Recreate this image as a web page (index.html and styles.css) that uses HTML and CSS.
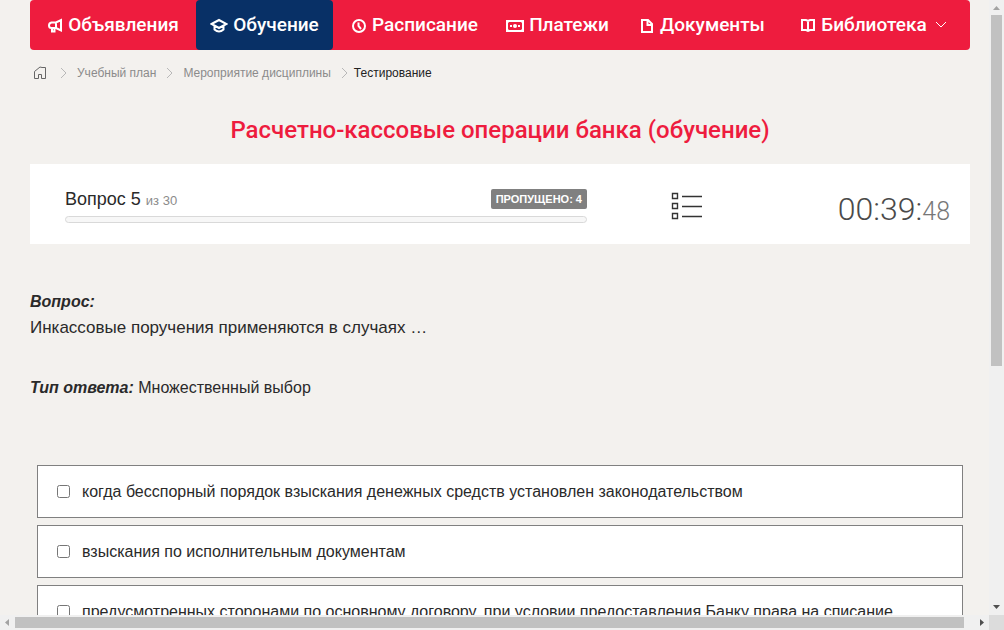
FILE: index.html
```html
<!DOCTYPE html>
<html lang="ru">
<head>
<meta charset="utf-8">
<meta name="viewport" content="width=device-width, initial-scale=1">
<title>Тестирование</title>
<link rel="stylesheet" href="styles.css">
</head>
<body>
<div class="frame">
  <div class="viewport">
    <nav class="menu">
      <a class="menu-item" href="#"><svg class="icon" viewBox="0 0 16 16"><path d="M14 3v10.500L9 11H4.500a2.500 2.500 0 0 1-2.500-2.500Q2 6 4.500 5.500L9 5.500zM9 5.500V11M5 11v3.500h2.500V11"/></svg><span>Объявления</span></a>
      <a class="menu-item menu-item-active" href="#"><svg class="icon icon-wide" viewBox="0 0 18 16"><path d="M1.500 7 9 3l7.500 4L9 11zM4.500 9v3.500Q9 16.500 13.500 12.500V9"/></svg><span>Обучение</span></a>
      <a class="menu-item" href="#"><svg class="icon" viewBox="0 0 16 16"><circle cx="8" cy="9" r="6"/><path d="M7.500 5.500V9l2.500 3"/></svg><span>Расписание</span></a>
      <a class="menu-item" href="#"><svg class="icon icon-wide" viewBox="0 0 18 16"><path d="M1 4h16v10H1z"/><circle class="solid" cx="9" cy="9" r="2"/><path class="solid" d="M1 3h4L1 7zM17 3h-4l4 4zM1 15h4l-4-4zM17 15h-4l4-4zM4 8h2v2H4zM12 8h2v2h-2z"/></svg><span>Платежи</span></a>
      <a class="menu-item" href="#"><svg class="icon" viewBox="0 0 16 16"><path d="M3 3h6l4 4v8H3zM8.500 3v5H13"/></svg><span>Документы</span></a>
      <a class="menu-item menu-item-drop" href="#"><svg class="icon" viewBox="0 0 16 16"><path d="M2 3h4L8 4l2-1h4v10h-4l-2 1-2-1H2zM8 4v11"/></svg><span>Библиотека</span><svg class="caret" viewBox="0 0 12 8"><path d="m1 1 5 5 5-5"/></svg></a>
    </nav>
    <nav class="crumbs" aria-label="Навигация">
      <a class="crumb-home" href="#" aria-label="Главная"><svg viewBox="0 0 14 14"><path d="M1.500 12.500h4V8.500h3v4h4v-11H9L7 1 1.500 5.500z"/></svg></a>
      <svg class="crumb-arrow" viewBox="0 0 7 12"><path d="m1 1 5 5-5 5"/></svg>
      <a href="#">Учебный план</a>
      <svg class="crumb-arrow" viewBox="0 0 7 12"><path d="m1 1 5 5-5 5"/></svg>
      <a href="#">Мероприятие дисциплины</a>
      <svg class="crumb-arrow crumb-arrow-last" viewBox="0 0 7 12"><path d="m1 1 5 5-5 5"/></svg>
      <span class="crumb-current">Тестирование</span>
    </nav>
    <h1 class="title">Расчетно-кассовые операции банка (обучение)</h1>
    <section class="status">
      <div class="progress">
        <div class="progress-head">
          <div class="counter">Вопрос 5 <small>из 30</small></div>
          <span class="badge">ПРОПУЩЕНО: 4</span>
        </div>
        <div class="bar"></div>
      </div>
      <button class="list-button" type="button" aria-label="Список вопросов"><svg viewBox="0 0 32 30"><path d="M1.500 2.500h5v5h-5zM1.500 12.500h5v5h-5zM1.500 22.500h5v5h-5zM11 5.500h20M11 15.500h20M11 25.500h20"/></svg></button>
      <div class="timer">00:39:<small>48</small></div>
    </section>
    <section class="question">
      <h2 class="label">Вопрос:</h2>
      <p class="question-text">Инкассовые поручения применяются в случаях …</p>
      <p class="answer-type"><span class="label">Тип ответа:</span> Множественный выбор</p>
    </section>
    <form class="answers">
      <label class="answer"><input type="checkbox"><span>когда бесспорный порядок взыскания денежных средств установлен законодательством</span></label>
      <label class="answer"><input type="checkbox"><span>взыскания по исполнительным документам</span></label>
      <label class="answer"><input type="checkbox"><span>предусмотренных сторонами по основному договору, при условии предоставления Банку права на списание</span></label>
    </form>
  </div>
  <div class="scroll scroll-y"><svg class="arrow-off" viewBox="0 0 15 15"><path d="M4 10 7.500 6l3.500 4z"/></svg><div class="thumb thumb-y"></div><svg class="arrow-end" viewBox="0 0 15 15"><path d="M4 5h7L7.500 9z"/></svg></div>
  <div class="scroll scroll-x"><svg class="arrow-off" viewBox="0 0 15 15"><path d="M9 4v7L5 7.500z"/></svg><div class="thumb thumb-x"></div><svg class="arrow-end" viewBox="0 0 15 15"><path d="M6 4v7l4-3.500z"/></svg></div>
  <div class="corner"></div>
</div>
</body>
</html>
```
FILE: styles.css
```css
* { box-sizing: border-box; }
body {
  margin: 0;
  background: #f3f1ee;
  color: #2a2a2a;
  font: 16px/24px "Liberation Sans", Arial, sans-serif;
}
a { color: inherit; text-decoration: none; }
svg { display: block; flex: none; fill: none; stroke: currentColor; }
h1, h2, p { margin: 0; }

.frame {
  display: grid;
  grid-template: minmax(0, 1fr) 15px / minmax(0, 1fr) 15px;
  height: 100vh;
}
.viewport { overflow: hidden; padding: 0 19px 0 30px; }

.menu {
  display: grid;
  grid-template-columns: 166fr 137fr 163fr 123fr 166fr 185fr;
  height: 50px;
  border-radius: 4px;
  background: #ee1c3e;
  color: #fff;
  font: 500 19px/24px Roboto, "Noto Sans", sans-serif;
  white-space: nowrap;
}
.menu-item {
  display: flex;
  align-items: center;
  justify-content: center;
  gap: 5px;
  border-radius: 4px;
}
.menu-item-active { background: #083066; }
.menu-item-drop { padding-right: 8px; }
.icon { width: 16px; height: 16px; stroke-width: 2; }
.icon-wide { width: 18px; }
.icon .solid { fill: currentColor; stroke: none; }
.caret { width: 12px; height: 8px; margin-left: 3px; }

.crumbs {
  display: flex;
  align-items: center;
  height: 46px;
  padding-left: 3px;
  gap: 10px;
  color: #8b8b8b;
  font-size: 12px;
}
.crumb-home svg { width: 14px; height: 14px; color: #666; }
.crumb-home { margin-right: 3px; }
.crumb-arrow { width: 7px; height: 12px; color: #b8b8b8; }
.crumb-arrow-last { margin-right: -4px; }
.crumb-current { color: #222; }

.title {
  padding: 17px 0;
  color: #ee1c3e;
  font: 500 24px/34px Roboto, "Noto Sans", sans-serif;
  text-align: center;
}

.status {
  display: grid;
  grid-template-columns: 557fr 200fr 183fr;
  align-items: center;
  height: 80px;
  background: #fff;
}
.progress { padding: 4px 0 0 35px; }
.progress-head { display: flex; align-items: center; justify-content: space-between; height: 20px; }
.counter { padding-top: 2px; font-size: 18px; }
.counter small { color: #8b8b8b; font-size: 13px; }
.badge {
  padding: 0 5px;
  border-radius: 2px;
  background: #808080;
  color: #fff;
  font-size: 11px;
  font-weight: bold;
  line-height: 20px;
}
.bar { height: 7px; margin-top: 7px; border: 1px solid #d9d9d9; border-radius: 4px; background: #f7f7f7; }
.list-button { justify-self: center; padding: 3px 0 0; border: 0; background: none; color: #333; }
.list-button svg { width: 32px; height: 30px; stroke-width: 1.4; }
.timer {
  padding: 12px 20px 0 0;
  color: #4a4a4a;
  font: 300 32px/40px Roboto, sans-serif;
  text-align: right;
}
.timer small { color: #777; font-size: 25px; }

.question { padding-top: 46px; }
.label { font-size: 16px; font-weight: bold; font-style: italic; }
.question-text { padding-top: 2px; font-size: 17px; }
.answer-type { padding-top: 36px; }

.answers { display: grid; gap: 7px; padding: 65px 7px 0; }
.answer {
  display: flex;
  align-items: center;
  height: 53px;
  padding-left: 19px;
  gap: 12px;
  border: 1px solid #808080;
  background: #fff;
  white-space: nowrap;
}
.answer input { flex: none; width: 13px; height: 13px; margin: 0; }

.scroll { display: flex; background: #f0f0f0; }
.scroll svg { width: 15px; height: 15px; stroke: none; fill: #505050; }
.scroll .arrow-off { fill: #a3a3a3; }
.scroll-y { flex-direction: column; }
.thumb { background: #c1c1c1; }
.thumb-y { height: 57%; margin: 0 2px; }
.thumb-x { width: 96%; margin: 2px 0; }
.arrow-end { margin-top: auto; margin-left: auto; }
.corner { background: #dcdcdc; }
```
